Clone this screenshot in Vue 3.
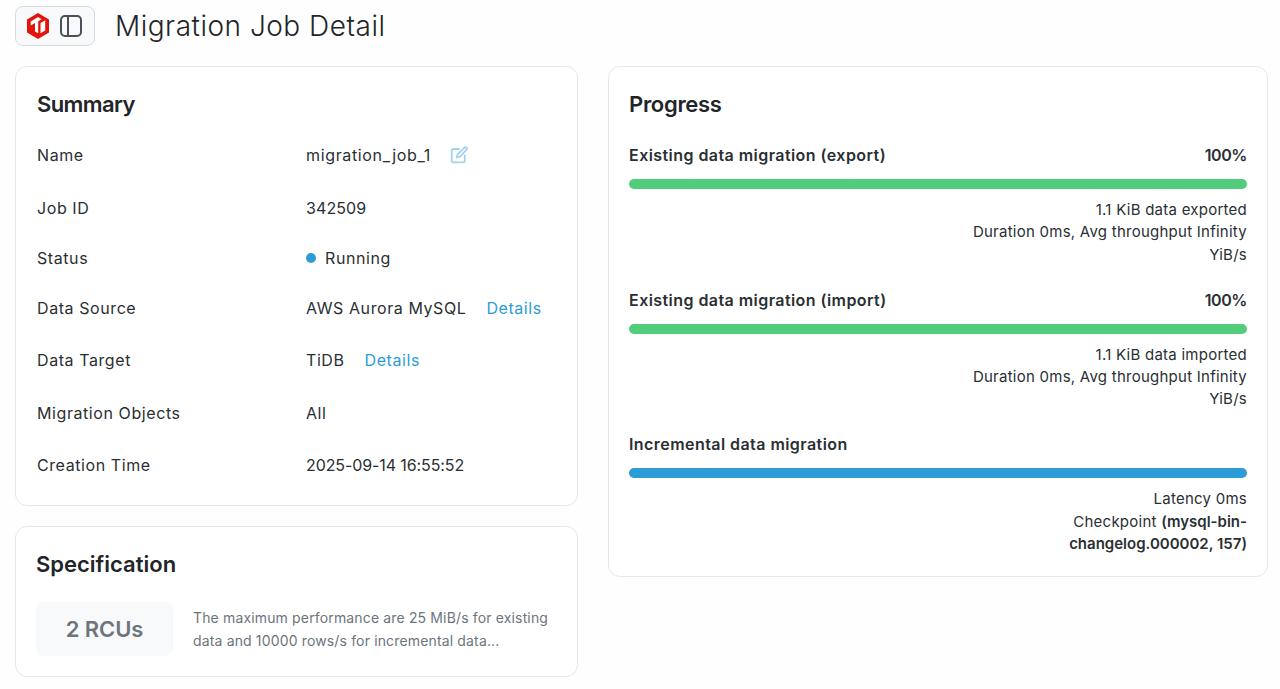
<script setup>
const rows = [
  { label: 'Name', value: 'migration_job_1', edit: true, h: 53 },
  { label: 'Job ID', value: '342509', num: true, h: 50 },
  { label: 'Status', value: 'Running', dot: true, h: 50 },
  { label: 'Data Source', value: 'AWS Aurora MySQL', link: true, h: 52 },
  { label: 'Data Target', value: 'TiDB', link: true, h: 53 },
  { label: 'Migration Objects', value: 'All', h: 52 },
  { label: 'Creation Time', value: '2025-09-14 16:55:52', date: true, h: 40 }
]
const steps = [
  { title: 'Existing data migration (export)', pct: '100%', color: 'green', lines: ['1.1 KiB data exported', 'Duration 0ms, Avg throughput Infinity YiB/s'] },
  { title: 'Existing data migration (import)', pct: '100%', color: 'green', lines: ['1.1 KiB data imported', 'Duration 0ms, Avg throughput Infinity YiB/s'] },
  { title: 'Incremental data migration', pct: '', color: 'blue', lines: ['Latency 0ms'], checkpoint: ['(mysql-bin-', 'changelog.000002, 157)'] }
]
</script>

<template>
  <div class="page">
    <header class="head">
      <div class="logo-box">
        <svg width="22" height="26" viewBox="0 0 22 26">
          <path fill="#e3140c" d="M11 0 22 6.4V19.6L11 26 0 19.6V6.4Z" />
          <path fill="#fff" d="M3.7 8.4 11 4.1l3.6 2.1-3.4 2V20.3L8 18.5V10l-4.3 2.4ZM13.5 10l4.7-2.7V17.6l-4.7 2.7Z" />
        </svg>
        <svg width="22" height="22" viewBox="0 0 22 22" fill="none" stroke="#495057" stroke-width="2">
          <rect x="1" y="1" width="20" height="20" rx="4" />
          <path d="M8 1V21" />
        </svg>
      </div>
      <h1>Migration Job Detail</h1>
    </header>
    <main class="grid">
      <div class="col">
        <section class="card summary">
          <h2>Summary</h2>
          <div v-for="r in rows" :key="r.label" class="row" :style="{ height: r.h + 'px' }">
            <div class="label">{{ r.label }}</div>
            <div class="value">
              <span v-if="r.dot" class="dot"></span>
              <span :class="{ num: r.num, date: r.date, wide: r.edit }">{{ r.value }}</span>
              <svg v-if="r.edit" class="edit" width="18" height="18" viewBox="0 0 18 18" fill="none" stroke="#a3d4ef" stroke-width="1.8" stroke-linecap="round" stroke-linejoin="round">
                <path d="M9 3H3.5A1.8 1.8 0 0 0 1.7 4.8V14.5a1.8 1.8 0 0 0 1.8 1.8H13a1.8 1.8 0 0 0 1.8-1.8V9.5" />
                <path d="M14.6 1.6a1.5 1.5 0 0 1 2.1 2.1L9.6 10.8 6.7 11.5l.7-2.9Z" />
              </svg>
              <a v-if="r.link" class="link">Details</a>
            </div>
          </div>
        </section>
        <section class="card spec">
          <h2>Specification</h2>
          <div class="spec-body">
            <div class="rcu">2 RCUs</div>
            <p>The maximum performance are 25 MiB/s for existing data and 10000 rows/s for incremental data...</p>
          </div>
        </section>
      </div>
      <section class="card progress">
        <h2>Progress</h2>
        <div v-for="s in steps" :key="s.title" class="step">
          <div class="step-head">
            <span>{{ s.title }}</span>
            <span class="pct">{{ s.pct }}</span>
          </div>
          <div class="bar" :class="s.color"></div>
          <div class="notes">
            <div v-for="l in s.lines" :key="l">{{ l }}</div>
            <template v-if="s.checkpoint">
              <div>Checkpoint <b>{{ s.checkpoint[0] }}</b></div>
              <div><b>{{ s.checkpoint[1] }}</b></div>
            </template>
          </div>
        </div>
      </section>
    </main>
  </div>
</template>

<style>
body { background: #fefefe; }
</style>

<style scoped>
.page {
  font-family: Inter, "Noto Sans", sans-serif;
  color: #2a2f33;
  font-size: 16px;
  letter-spacing: 0.58px;
  box-sizing: border-box;
  height: 689px;
  overflow: hidden;
  padding: 6px 12px 0 15px;
}
.head { display: flex; align-items: center; height: 40px; gap: 21px; margin-bottom: 20px; }
.logo-box {
  width: 80px; height: 40px; box-sizing: border-box;
  border: 1px solid #d5dce0; border-radius: 8px; background: #f8f9fa;
  display: flex; align-items: center; padding-left: 11px; gap: 11px;
}
h1 { margin: 0; font-size: 28px; font-weight: 300; color: #1f2529; letter-spacing: 0.5px; margin-left: -1px; }
.grid { display: grid; grid-template-columns: 563px 660px; gap: 30px; align-items: start; }
.col { display: flex; flex-direction: column; gap: 20px; }
.card {
  background: #fff; border: 1px solid #e3e8eb; border-radius: 12px;
  box-sizing: border-box; padding: 20px;
}
h2 { margin: 0; font-size: 22px; line-height: 34px; font-weight: 600; color: #1f2529; letter-spacing: 0; }
.summary { height: 440px; }
.summary h2 { margin-bottom: 20px; letter-spacing: -0.6px; padding-left: 1px; }
.row { display: flex; align-items: flex-start; line-height: 28px; }
.label { width: 270px; flex: none; box-sizing: border-box; padding-left: 1px; }
.value { display: flex; align-items: center; height: 28px; }
.num { letter-spacing: 0.1px; }
.date { letter-spacing: -0.1px; }
.wide { letter-spacing: 0.65px; }
.dot { width: 10px; height: 10px; border-radius: 50%; background: #2d9cd6; margin-right: 9px; }
.edit { margin-left: 19px; }
.link { margin-left: 20px; color: #2d9cd6; }
.spec { height: 151px; }
.spec-body { display: flex; gap: 20px; margin-top: 21px; }
.rcu {
  width: 137px; height: 54px; flex: none; border-radius: 8px; background: #f8f9fa;
  display: flex; align-items: center; justify-content: center;
  font-size: 22px; font-weight: 600; color: #6c757d; letter-spacing: -0.1px;
}
.spec-body p { margin: 0; padding-top: 4px; font-size: 14px; line-height: 23px; color: #6c757d; letter-spacing: 0.15px; }
.progress { height: 511px; }
.progress h2 { margin-bottom: 20px; letter-spacing: -0.3px; }
.step { margin-bottom: 20px; }
.step:nth-of-type(2) { margin-bottom: 19.5px; }
.step-head { display: flex; justify-content: space-between; font-weight: 600; line-height: 28px; height: 28px; letter-spacing: 0.44px; }
.pct { letter-spacing: -0.4px; }
.bar { height: 10px; border-radius: 5px; margin: 10px 0; }
.bar.green { background: #52cd7c; }
.bar.blue { background: #2d9cd6; }
.notes { text-align: right; line-height: 22.3px; font-size: 15px; letter-spacing: 0.25px; width: 300px; margin-left: auto; }
.notes b { font-weight: 600; letter-spacing: 0; }
</style>
